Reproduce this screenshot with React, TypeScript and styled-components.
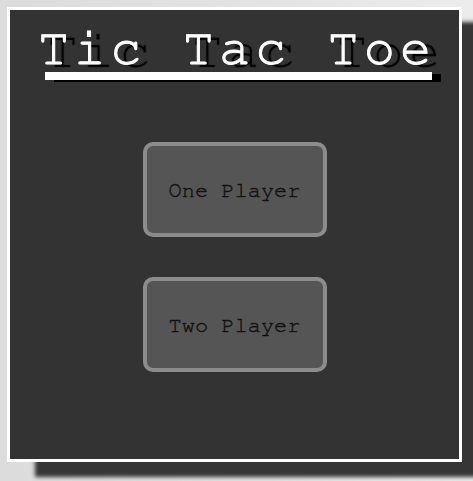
import styled, { createGlobalStyle } from 'styled-components'

const mono = `'Nimbus Mono PS', 'Nimbus Mono L', FreeMono, Courier, 'Courier New', 'Liberation Mono', monospace`

const GlobalStyle = createGlobalStyle`
  html, body {
    margin: 0;
    padding: 0;
  }
  body {
    min-height: 100vh;
    background: linear-gradient(90deg, #dcdcdc 0%, #e4e4e4 60%, #ececec 100%);
    font-family: ${mono};
    overflow: hidden;
  }
`

export default function App() {
  function handleStart(mode: number) {
    console.log('start', mode)
  }

  return (
    <>
      <GlobalStyle />
      <Board>
        <Header>
          <Title>Tic Tac Toe</Title>
          <TitleBar />
        </Header>
        <Menu>
          <ModeButton onClick={() => handleStart(1)}>One Player</ModeButton>
          <ModeButton onClick={() => handleStart(2)}>Two Player</ModeButton>
        </Menu>
      </Board>
    </>
  )
}

const Board = styled.div`
  box-sizing: border-box;
  margin: 7px;
  width: 455px;
  height: 455px;
  border: 3px solid #ffffff;
  background-color: #333333;
  box-shadow: 28px 15px 4px #363636;
  padding-top: 15px;
  display: flex;
  flex-direction: column;
  align-items: center;
`

const Header = styled.div`
  display: flex;
  flex-direction: column;
  align-items: center;
`

const Title = styled.h1`
  margin: 0 -5px 0 0;
  font-family: ${mono};
  font-weight: normal;
  font-size: 52px;
  line-height: 47px;
  letter-spacing: 5px;
  color: #ffffff;
  -webkit-text-stroke: 1px #ffffff;
  text-shadow: 9px 3px 1px #000000;
`

const TitleBar = styled.div`
  margin-left: 8px;
  width: 387px;
  height: 8px;
  background-color: #ffffff;
  box-shadow: 9px 2px 0 #000000;
`

const Menu = styled.div`
  margin-top: 62px;
  display: flex;
  flex-direction: column;
  gap: 40px;
`

const ModeButton = styled.button`
  box-sizing: border-box;
  width: 184px;
  height: 95px;
  border: 4px solid #8c8c8c;
  border-radius: 10px;
  background-color: #555555;
  color: #111111;
  -webkit-text-stroke: 0.4px #111111;
  font-family: ${mono};
  font-size: 22px;
  padding: 0;
  cursor: pointer;
`
